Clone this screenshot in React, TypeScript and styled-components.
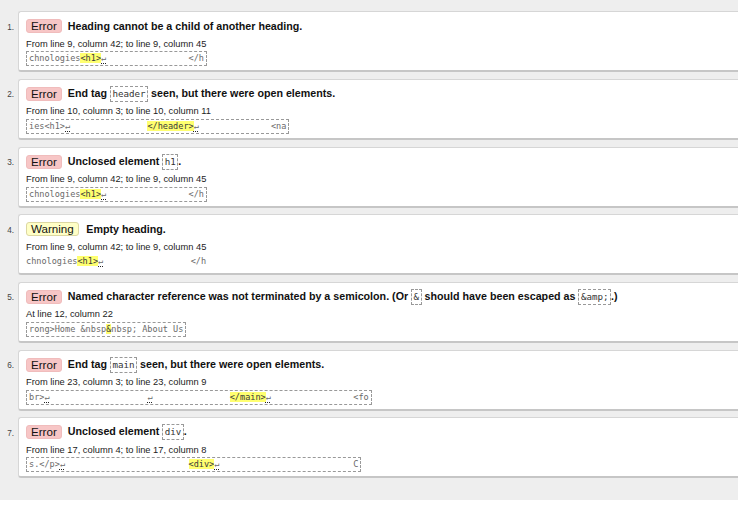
import React from "react";
import styled, { createGlobalStyle } from "styled-components";

const GlobalStyle = createGlobalStyle`
  html, body {
    margin: 0;
    padding: 0;
    background: #ffffff;
    overflow: hidden;
    font-family: "Liberation Sans", Arial, sans-serif;
  }
`;

const List = styled.ol`
  margin: 0;
  padding: 11.3px 0 21.7px;
  list-style: none;
  background: #eeeeee;
  display: flex;
  flex-direction: column;
  gap: 6.67px;
`;

const Item = styled.li`
  display: flex;
  align-items: flex-start;
`;

const Num = styled.span`
  flex: none;
  width: 18px;
  box-sizing: border-box;
  padding: 11.4px 4px 0 0;
  text-align: right;
  font-size: 8.2px;
  line-height: 10px;
  color: #444;
`;

const Card = styled.div`
  flex: 1;
  min-width: 0;
  height: 61px;
  box-sizing: border-box;
  background: #ffffff;
  border: 1px solid #d6d6d6;
  border-right: 0;
  border-bottom: 2px solid #c6c6c6;
  border-radius: 3px 0 0 3px;
  padding: 6px 0 0 7px;
  overflow: hidden;
`;

const Head = styled.div`
  display: flex;
  align-items: center;
  height: 16px;
  white-space: nowrap;
`;

const Badge = styled.span<{ $kind: "error" | "warning" }>`
  display: inline-flex;
  align-items: center;
  height: 14px;
  box-sizing: border-box;
  padding: 0 4px;
  margin-right: ${(p) => (p.$kind === "error" ? "6px" : "7.5px")};
  border-radius: 3px;
  font-size: 11.6px;
  line-height: 12px;
  color: #111;
  background: ${(p) => (p.$kind === "error" ? "#f7c6c6" : "#ffffc6")};
  border: 1px solid ${(p) => (p.$kind === "error" ? "#f0bcbc" : "#dcd7a2")};
`;

const Message = styled.span`
  font-weight: bold;
  font-size: 10.7px;
  color: #111;
`;

const MsgCode = styled.code`
  display: inline-block;
  vertical-align: middle;
  height: 16px;
  box-sizing: border-box;
  padding: 0 1.5px;
  border: 1px dashed #999;
  font-family: "DejaVu Sans Mono", monospace;
  font-size: 9.2px;
  font-weight: normal;
  line-height: 14px;
  color: #333;
  background: #fff;
`;

const Location = styled.p`
  margin: 3.5px 0 0;
  font-size: 9.3px;
  line-height: 12px;
  color: #222;
  white-space: nowrap;
`;

const Extract = styled.div<{ $plain?: boolean }>`
  width: fit-content;
  margin-top: 1.5px;
  height: 15px;
  box-sizing: border-box;
  border: ${(p) => (p.$plain ? "0" : "1px dashed #999")};
  padding: ${(p) => (p.$plain ? "0" : "0 2px")};
  font-family: "DejaVu Sans Mono", monospace;
  font-size: 8.55px;
  line-height: ${(p) => (p.$plain ? "15px" : "13px")};
  color: #6a6a6a;
  white-space: pre;
`;

const Mark = styled.mark`
  background: #ffff70;
  color: #3a3a3a;
`;

const Nl = styled.abbr`
  text-decoration: underline dotted #222;
  text-underline-offset: 2px;
`;

type Seg = { t: string; k?: "hl" | "nl" };
type MsgPart = string | { code: string };

interface Entry {
  kind: "error" | "warning";
  msg: MsgPart[];
  loc: string;
  extract: Seg[];
  plain?: boolean;
}

const sp = (n: number): Seg => ({ t: " ".repeat(n) });
const hl = (t: string): Seg => ({ t, k: "hl" });
const nl: Seg = { t: "\u21B5", k: "nl" };
const tx = (t: string): Seg => ({ t });

const entries: Entry[] = [
  {
    kind: "error",
    msg: ["Heading cannot be a child of another heading."],
    loc: "From line 9, column 42; to line 9, column 45",
    extract: [tx("chnologies"), hl("<h1>"), nl, sp(16), tx("</h")],
  },
  {
    kind: "error",
    msg: ["End tag ", { code: "header" }, " seen, but there were open elements."],
    loc: "From line 10, column 3; to line 10, column 11",
    extract: [tx("ies<h1>"), nl, sp(15), hl("</header>"), nl, sp(14), tx("<na")],
  },
  {
    kind: "error",
    msg: ["Unclosed element ", { code: "h1" }, "."],
    loc: "From line 9, column 42; to line 9, column 45",
    extract: [tx("chnologies"), hl("<h1>"), nl, sp(16), tx("</h")],
  },
  {
    kind: "warning",
    msg: ["Empty heading."],
    loc: "From line 9, column 42; to line 9, column 45",
    extract: [tx("chnologies"), hl("<h1>"), nl, sp(17), tx("</h")],
    plain: true,
  },
  {
    kind: "error",
    msg: [
      "Named character reference was not terminated by a semicolon. (Or ",
      { code: "&" },
      " should have been escaped as ",
      { code: "&amp;" },
      ".)",
    ],
    loc: "At line 12, column 22",
    extract: [tx("rong>Home &nbsp"), hl("&"), tx("nbsp; About Us")],
  },
  {
    kind: "error",
    msg: ["End tag ", { code: "main" }, " seen, but there were open elements."],
    loc: "From line 23, column 3; to line 23, column 9",
    extract: [tx("br>"), nl, sp(19), nl, sp(15), hl("</main>"), nl, sp(16), tx("<fo")],
  },
  {
    kind: "error",
    msg: ["Unclosed element ", { code: "div" }, "."],
    loc: "From line 17, column 4; to line 17, column 8",
    extract: [tx("s.</p>"), nl, sp(24), hl("<div>"), nl, sp(26), tx("C")],
  },
];

export default function App() {
  return (
    <>
      <GlobalStyle />
      <List>
        {entries.map((e, i) => (
          <Item key={i}>
            <Num>{i + 1}.</Num>
            <Card>
              <Head>
                <Badge $kind={e.kind}>{e.kind === "error" ? "Error" : "Warning"}</Badge>
                <Message>
                  {e.msg.map((m, j) =>
                    typeof m === "string" ? (
                      <React.Fragment key={j}>{m}</React.Fragment>
                    ) : (
                      <MsgCode key={j}>{m.code}</MsgCode>
                    )
                  )}
                </Message>
              </Head>
              <Location>{e.loc}</Location>
              <Extract $plain={e.plain}>
                {e.extract.map((s, j) =>
                  s.k === "hl" ? (
                    <Mark key={j}>{s.t}</Mark>
                  ) : s.k === "nl" ? (
                    <Nl key={j} title="Line break">
                      {s.t}
                    </Nl>
                  ) : (
                    <React.Fragment key={j}>{s.t}</React.Fragment>
                  )
                )}
              </Extract>
            </Card>
          </Item>
        ))}
      </List>
    </>
  );
}
